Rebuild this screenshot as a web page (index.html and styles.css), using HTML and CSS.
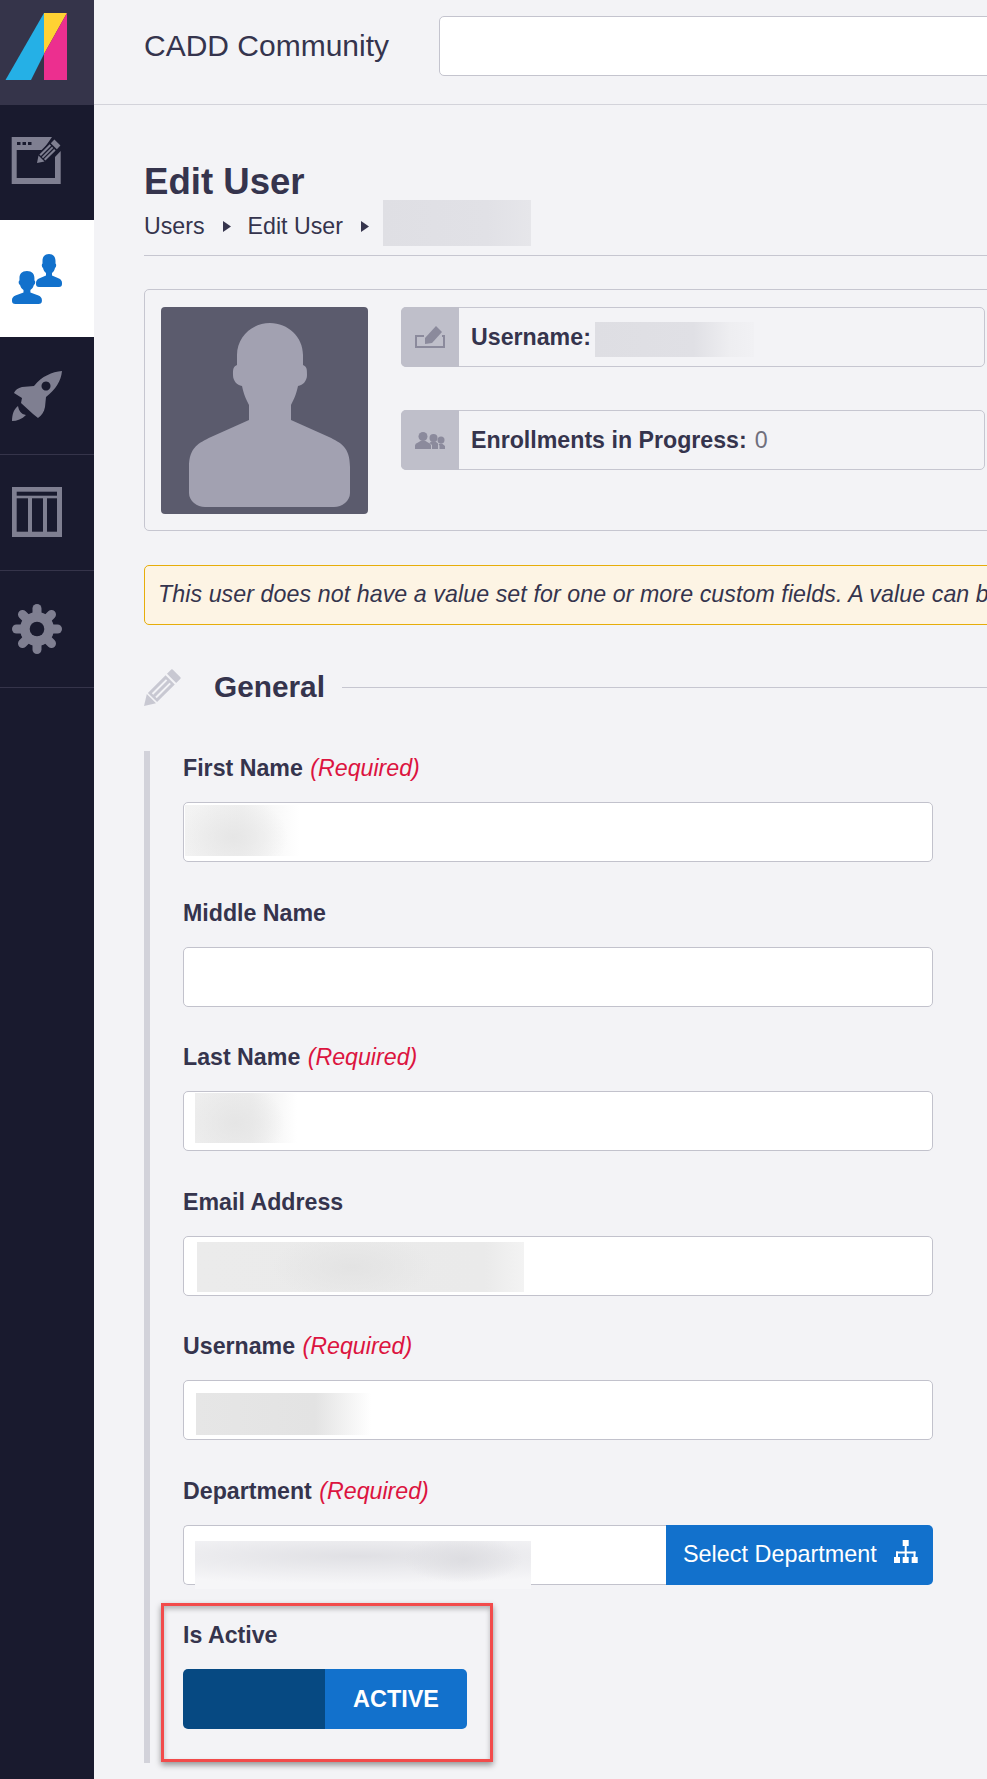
FILE: index.html
```html
<!DOCTYPE html>
<html lang="en">
<head>
<meta charset="utf-8">
<title>Edit User</title>
<link rel="stylesheet" href="styles.css">
</head>
<body>
<div class="app">
  <nav class="sidebar">
    <div class="logo">
      <svg class="nav-svg" viewBox="0 0 94 105" width="94" height="105">
        <polygon fill="#25b0e6" points="44,13 44,54 31,80 5.5,80"/>
        <polygon fill="#ffd233" points="44,13 67,13 44,54"/>
        <polygon fill="#ec2f8f" points="67,13 67,80 44,80 44,54"/>
      </svg>
    </div>
    <a class="nav-item nav-first">
      <svg class="nav-svg" viewBox="0 0 94 115" width="94" height="115">
        <path fill="#7f7f91" d="M11.7 32H52L43 45H16.7V73H55V52L60.7 46V79H11.7Z"/>
        <rect fill="#191a2e" x="17" y="37" width="3.5" height="3"/><rect fill="#191a2e" x="22.5" y="37" width="3.5" height="3"/><rect fill="#191a2e" x="28" y="37" width="3.5" height="3"/>
        <g transform="translate(37 58) rotate(45) scale(.85)">
          <path fill="#191a2e" d="M-7 -35H7V-8L0 2L-7 -8Z"/>
          <path fill="#7f7f91" d="M-5 -34H5V-28H-5ZM-5 -26H-2.5V-9H-5ZM-1 -26H1V-9H-1ZM2.500 -26H5V-9H2.500ZM-5 -7.500H5L0 0Z"/>
        </g>
      </svg>
    </a>
    <a class="nav-item nav-active">
      <svg class="nav-svg" viewBox="0 0 94 117" width="94" height="117">
        <g fill="#1271cc">
          <path transform="translate(36 34)" d="M13 0C8.500 0 6.500 3 6.500 7V9.500C5.500 10 5.500 13 7 14C7.500 16 8.500 18 10 19V21.500L3 24.500C1 25.500 0 27 0 29V30C0 32 1 33 3 33H23C25 33 26 32 26 30V29C26 27 25 25.500 23 24.500L16 21.500V19C17.500 18 18.500 16 19 14C20.500 13 20.500 10 19.500 9.500V7C19.500 3 17.500 0 13 0Z"/>
          <path transform="translate(12 51) scale(1.15 1)" d="M13 0C8.500 0 6.500 3 6.500 7V9.500C5.500 10 5.500 13 7 14C7.500 16 8.500 18 10 19V21.500L3 24.500C1 25.500 0 27 0 29V30C0 32 1 33 3 33H23C25 33 26 32 26 30V29C26 27 25 25.500 23 24.500L16 21.500V19C17.500 18 18.500 16 19 14C20.500 13 20.500 10 19.500 9.500V7C19.500 3 17.500 0 13 0Z"/>
        </g>
      </svg>
    </a>
    <a class="nav-item nav-rocket">
      <svg class="nav-svg" viewBox="0 337 94 117" width="94" height="117">
        <path fill="#7f7f91" fill-rule="evenodd" d="M62 371C52 372 42 376 34 386L22 387C18 388 15 390 14 393L22 398L21 403L33 414L38 418C42 415 44 412 45 407L46 397C56 389 61 381 62 371ZM46 381.500A4.500 4.500 0 1 0 46.010 381.500Z"/>
        <path fill="#7f7f91" d="M12 421C12 414 14 409 18 406C19 411 21 414 26 415C22 419 17 421 12 421Z"/>
      </svg>
    </a>
    <a class="nav-item nav-table">
      <svg class="nav-svg" viewBox="0 455 94 115" width="94" height="115">
        <rect fill="#7f7f91" x="12" y="487" width="50" height="50"/>
        <g fill="#191a2e">
          <rect x="16.700" y="491.700" width="40.300" height="4"/>
          <rect x="16.700" y="498.300" width="11.300" height="33.400"/>
          <rect x="32" y="498.300" width="11" height="33.400"/>
          <rect x="47" y="498.300" width="10" height="33.400"/>
        </g>
      </svg>
    </a>
    <a class="nav-item nav-gear">
      <svg class="nav-svg" viewBox="0 571 94 116" width="94" height="116">
        <g stroke="#7f7f91" stroke-width="9" stroke-linecap="round">
          <line x1="37" y1="608.500" x2="37" y2="649.500"/>
          <line x1="16.500" y1="629" x2="57.500" y2="629"/>
          <line x1="22.500" y1="614.500" x2="51.500" y2="643.500"/>
          <line x1="51.500" y1="614.500" x2="22.500" y2="643.500"/>
        </g>
        <circle cx="37" cy="629" r="17" fill="#7f7f91"/>
        <circle cx="37" cy="629" r="7.300" fill="#191a2e"/>
      </svg>
    </a>
  </nav>

  <main class="main">
    <header class="topbar">
      <div class="site-title">CADD Community</div>
      <input class="search" type="text" aria-label="Search">
    </header>

    <section class="content">
      <h1 class="page-title">Edit User</h1>
      <div class="crumbs">
        <span>Users</span>
        <svg class="caret" viewBox="0 0 8 11" width="8" height="11"><polygon fill="#35344d" points="0,0 8,5.500 0,11"/></svg>
        <span>Edit User</span>
        <svg class="caret" viewBox="0 0 8 11" width="8" height="11"><polygon fill="#35344d" points="0,0 8,5.500 0,11"/></svg>
        <span class="blur blur-crumb"></span>
      </div>

      <div class="profile">
        <div class="avatar">
          <svg viewBox="0 0 207 207" width="207" height="207">
            <path fill="#a2a1b1" d="M109 16C91 16 76 30 76 48V58C72 60 72 62 72 68C72 74 76 78 81 79C83 88 85 92 88 98V113L50 130C38 136 28 140 28 160V186C28 194 36 200 44 200H173C181 200 189 194 189 186V160C189 140 180 136 168 130L130 113V98C133 92 135 88 137 79C142 78 146 74 146 68C146 62 146 60 142 58V48C142 30 127 16 109 16Z"/>
          </svg>
        </div>
        <div class="facts">
          <div class="fact">
            <div class="fact-icon">
              <svg viewBox="0 0 30 22" width="30" height="22">
                <path fill="none" stroke="#8b8a9c" stroke-width="2" d="M9 10H1V21H29V10H27"/>
                <path fill="#8b8a9c" d="M21 0L27 6L17 17L10 18V12Z"/>
              </svg>
            </div>
            <div class="fact-text"><b>Username:</b><span class="blur blur-user"></span></div>
          </div>
          <div class="fact">
            <div class="fact-icon">
              <svg viewBox="0 0 30 17" width="30" height="17">
                <g fill="#8b8a9c">
                  <circle cx="8" cy="4.500" r="4.500"/>
                  <path d="M0 17V13.500Q0 11.500 3 10.500L5.500 9H10.500L13 10.500Q16 11.500 16 13.500V17Z"/>
                  <circle cx="18.500" cy="6" r="4"/>
                  <path d="M17 17V13L14.500 11L16.500 9.500H20.500L23 11.500V17Z"/>
                  <circle cx="26" cy="8" r="3.500"/>
                  <path d="M24.500 17V13.500L23.500 12.500L25 11.500H27L30 14V17Z"/>
                </g>
              </svg>
            </div>
            <div class="fact-text"><b>Enrollments in Progress:</b><span class="fact-value">0</span></div>
          </div>
        </div>
      </div>

      <div class="notice">This user does not have a value set for one or more custom fields. A value can be set below.</div>

      <div class="section-head">
        <svg class="section-icon" viewBox="0 0 37 37" width="37" height="37">
          <g transform="translate(0 37) rotate(45)" fill="#c8c8d2">
            <path d="M-6.500 -39H6.500V-45Q6.500 -46 5.500 -46H-5.500Q-6.500 -46 -6.500 -45Z"/>
            <path fill-rule="evenodd" d="M-6.500 -37H6.500V-12H-6.500ZM-3.500 -34.500V-14.500H-1.500V-34.500ZM1.500 -34.500V-14.500H3.500V-34.500Z"/>
            <path d="M-6.500 -10.500H6.500L0 0Z"/>
          </g>
        </svg>
        <h2 class="section-title">General</h2>
        <div class="section-rule"></div>
      </div>

      <form class="form">
        <div class="group">
          <label class="label">First Name <em class="req">(Required)</em></label>
          <div class="field"><input class="input" type="text"><span class="blur blur-first"></span></div>
        </div>
        <div class="group">
          <label class="label">Middle Name</label>
          <div class="field"><input class="input" type="text"></div>
        </div>
        <div class="group">
          <label class="label">Last Name <em class="req">(Required)</em></label>
          <div class="field"><input class="input" type="text"><span class="blur blur-last"></span></div>
        </div>
        <div class="group">
          <label class="label">Email Address</label>
          <div class="field"><input class="input" type="text"><span class="blur blur-email"></span></div>
        </div>
        <div class="group">
          <label class="label">Username <em class="req">(Required)</em></label>
          <div class="field"><input class="input" type="text"><span class="blur blur-username"></span></div>
        </div>
        <div class="group">
          <label class="label">Department <em class="req">(Required)</em></label>
          <div class="field field-dept">
            <input class="input input-dept" type="text">
            <button class="dept-btn" type="button">
              <span>Select Department</span>
              <svg class="dept-icon" viewBox="0 0 24 23" width="24" height="23">
                <g fill="#fff">
                  <rect x="8.700" y="0" width="6" height="6"/>
                  <rect x="10.700" y="6" width="2" height="6"/>
                  <rect x="2" y="11.500" width="19.500" height="2"/>
                  <rect x="2" y="11.500" width="2" height="6"/>
                  <rect x="19.500" y="11.500" width="2" height="6"/>
                  <rect x="10.700" y="11.500" width="2" height="6"/>
                  <rect x="0" y="17" width="6" height="6"/>
                  <rect x="8.700" y="17" width="6" height="6"/>
                  <rect x="17.700" y="17" width="6" height="6"/>
                </g>
              </svg>
            </button>
            <span class="blur blur-dept"></span>
          </div>
        </div>
        <div class="group group-last">
          <label class="label">Is Active</label>
          <div class="toggle"><span class="toggle-off"></span><span class="toggle-on">ACTIVE</span></div>
          <div class="callout"></div>
        </div>
      </form>
    </section>
  </main>
</div>
</body>
</html>
```

FILE: styles.css
```css
* { box-sizing: border-box; }
html, body { margin: 0; padding: 0; height: 1779px; overflow: hidden; }
body { background: #f3f3f6; color: #35344d; font-family: "Liberation Sans", Arial, sans-serif; font-size: 23.2px; }

.app { display: flex; width: 987px; height: 1779px; overflow: hidden; }

.sidebar { flex: none; width: 94px; background: #191a2e; }
.nav-svg { display: block; }
.logo { height: 105px; background: #35344a; }
.nav-item { display: block; }
.nav-first { height: 115px; }
.nav-active { height: 117px; background: #fff; }
.nav-rocket { height: 118px; border-bottom: 1px solid #35344a; }
.nav-table { height: 116px; border-bottom: 1px solid #35344a; }
.nav-gear { height: 117px; border-bottom: 1px solid #35344a; }

.main { flex: none; width: 893px; }

.topbar { display: flex; height: 105px; padding: 16px 0 0 50px; border-bottom: 1px solid #d3d3da; }
.site-title { flex: none; width: 295px; height: 60px; line-height: 60px; font-size: 30px; }
.search { flex: none; width: 620px; height: 60px; background: #fff; border: 1px solid #c4c4ce; border-radius: 5px; }

.content { padding: 57px 0 0 50px; width: 1000px; }

.page-title { margin: 0 0 8px; font-size: 36.6px; line-height: 40px; font-weight: 700; }

.crumbs { position: relative; display: flex; align-items: center; height: 46px; padding-bottom: 13px; border-bottom: 1px solid #c6c6d0; line-height: 32px; }
.caret { margin: 1px 17px 0 18px; }

.blur { position: absolute; display: block; }
.blur-crumb { left: 239px; top: -10px; width: 148px; height: 46px; background: linear-gradient(90deg, #dfdfe4, #e1e1e6 70%, #e6e6ea); }

.profile { display: flex; width: 900px; height: 242px; margin-top: 33px; padding: 17px 16px; gap: 33px; border: 1px solid #c6c6d0; border-radius: 5px; }
.avatar { flex: none; width: 207px; height: 207px; background: #5b5b6d; border-radius: 4px; }
.avatar svg { display: block; }
.facts { flex: none; width: 584px; display: flex; flex-direction: column; gap: 43px; }
.fact { display: flex; height: 60px; border: 1px solid #c6c6d0; border-radius: 5px; }
.fact-icon { flex: none; display: flex; align-items: center; justify-content: center; width: 58px; margin: -1px 0 -1px -1px; background: #bfbfca; border-radius: 5px 0 0 5px; }
.fact-text { position: relative; display: flex; align-items: center; padding-left: 12px; }
.fact-text b { font-weight: 700; }
.fact-value { margin-left: 8px; color: #6f6f7d; }
.blur-user { left: 136px; top: 14px; width: 159px; height: 35px; background: linear-gradient(90deg, #dedee3, #e0e0e5 62%, #eeeef1 85%, #f1f1f4); }

.notice { display: flex; align-items: center; width: 900px; height: 60px; margin-top: 34px; padding: 0 0 2px 13px; background: #fdf4e4; border: 1px solid #e6ad0a; border-radius: 5px; font-style: italic; white-space: nowrap; overflow: hidden; letter-spacing: 0.08px; }

.section-head { display: flex; align-items: center; height: 40px; margin-top: 42px; width: 900px; }
.section-icon { flex: none; overflow: visible; }
.section-title { flex: none; margin: 0 17px 0 33px; font-size: 29.8px; line-height: 40px; font-weight: 700; }
.section-rule { flex: 1; height: 1px; background: #c6c6d0; }

.form { width: 789px; margin-top: 44px; padding: 5px 0 34px 33px; border-left: 6px solid #d2d2da; }
.group { position: relative; margin-bottom: 38.500px; }
.group-last { margin-bottom: 0; }
.label { display: block; height: 24px; margin-bottom: 22px; line-height: 24px; font-weight: 700; }
.req { font-weight: 400; font-style: italic; color: #dc1440; margin-left: 1px; }

.field { position: relative; height: 60px; }
.input { display: block; width: 100%; height: 60px; background: #fff; border: 1px solid #c2c2cc; border-radius: 5px; }
.field-dept { display: flex; }
.input-dept { flex: 1; width: auto; min-width: 0; border-radius: 5px 0 0 5px; border-right: 0; }
.dept-btn { flex: none; display: flex; align-items: center; justify-content: space-between; width: 267px; height: 60px; padding: 0 15px 0 17px; background: #1271cc; color: #fff; border: 0; border-radius: 0 5px 5px 0; font: inherit; font-size: 23.4px; }
.dept-icon { margin-bottom: 6px; }

.blur-first { left: 2px; top: 3px; width: 115px; height: 51px; background: radial-gradient(ellipse 55px 40px at 48px 32px, #e6e6e6, rgba(255,255,255,0)), linear-gradient(90deg, #f3f3f3, #f0f0f0 50%, #fff); }
.blur-last { left: 12px; top: 2px; width: 102px; height: 50px; background: radial-gradient(ellipse 50px 40px at 40px 30px, #e5e5e5, rgba(255,255,255,0)), linear-gradient(90deg, #eee, #ededed 55%, #fff); }
.blur-email { left: 14px; top: 6px; width: 327px; height: 50px; background: radial-gradient(ellipse 80px 34px at 155px 25px, #e3e3e3, rgba(255,255,255,0)), linear-gradient(90deg, #ebebeb, #eaeaea 88%, #f3f3f3); }
.blur-username { left: 13px; top: 13px; width: 175px; height: 42px; background: linear-gradient(90deg, #e6e6e6, #e3e3e3 68%, #fff); }
.blur-dept { left: 12px; top: 16px; width: 336px; height: 48px; background: radial-gradient(ellipse 60px 24px at 268px 18px, #dddde1, rgba(244,244,246,0)), radial-gradient(ellipse 300px 28px at 165px 15px, #e0e0e4, rgba(244,244,246,0)), #f6f6f8; }

.toggle { display: flex; width: 284px; height: 60px; border-radius: 5px; overflow: hidden; }
.toggle-off { flex: 1; background: #064982; }
.toggle-on { flex: 1; display: flex; align-items: center; justify-content: center; background: #1271cc; color: #fff; font-weight: 700; font-size: 23.4px; }

.callout { position: absolute; left: -22px; top: -20px; width: 332px; height: 159px; border: 3px solid #f24b4b; box-shadow: 0 3px 6px rgba(0,0,0,.4), inset 0 3px 5px rgba(0,0,0,.25); pointer-events: none; }
```
